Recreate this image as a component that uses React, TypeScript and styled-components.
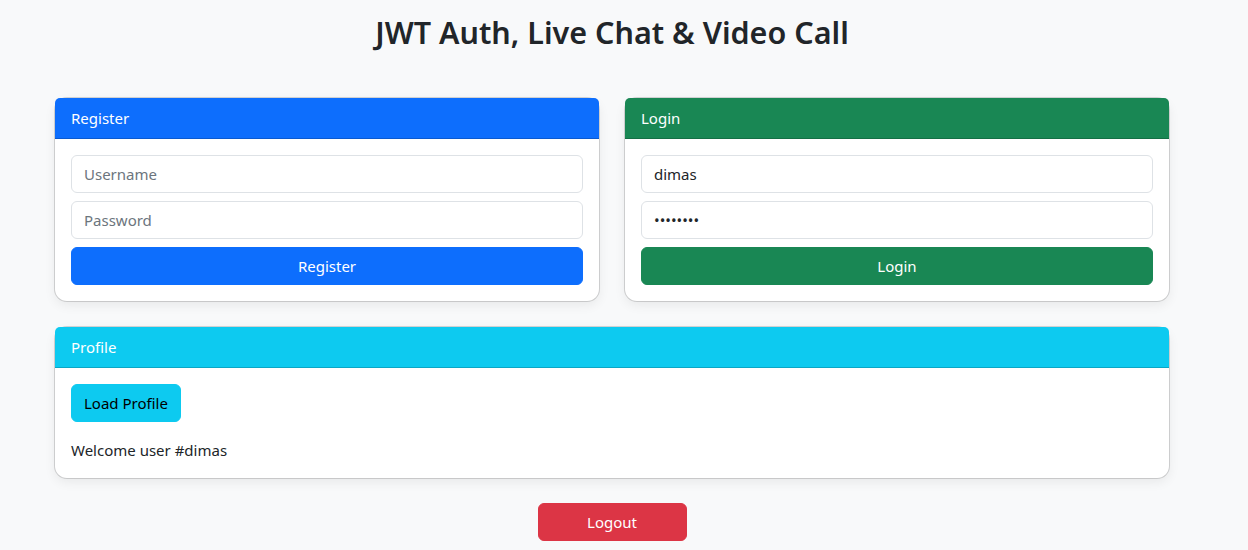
import styled, { createGlobalStyle } from 'styled-components';
import React from 'react';

const GlobalStyle = createGlobalStyle`
  * { box-sizing: border-box; }
  body {
    margin: 0;
    background: #f8f9fa;
    color: #212529;
    font-family: "Noto Sans", "Open Sans", "Liberation Sans", sans-serif;
    font-size: 15px;
    line-height: 24px;
  }
`;

const Page = styled.div`
  width: 1114px;
  margin-left: 55px;
  padding-top: 13px;
`;

const Title = styled.h1`
  margin: 0 0 47px;
  text-align: center;
  font-size: 30.5px;
  font-weight: 600;
  line-height: 38px;
  color: #212529;
`;

const Row = styled.div`
  display: grid;
  grid-template-columns: 1fr 1fr;
  gap: 26px;
  margin-bottom: 26px;
`;

const Card = styled.div<{ $mb?: number }>`
  display: flex;
  flex-direction: column;
  background: #fff;
  border-radius: 12px;
  box-shadow: 0 0 0 1px rgba(0, 0, 0, 0.15), 0 4px 12px rgba(0, 0, 0, 0.07);
  margin-bottom: ${({ $mb }) => $mb ?? 0}px;
`;

const CardHeader = styled.div<{ $bg: string }>`
  background: ${({ $bg }) => $bg};
  color: #fff;
  padding: 8px 16px;
  border-bottom: 1px solid rgba(0, 0, 0, 0.175);
  border-radius: 5px 5px 0 0;
  line-height: 24px;
`;

const CardBody = styled.div`
  padding: 16px;
  display: flex;
  flex-direction: column;
  gap: 8px;
`;

const Input = styled.input`
  display: block;
  width: 100%;
  height: 38px;
  padding: 6px 12px;
  font: inherit;
  color: #212529;
  background: #fff;
  border: 1px solid #dee2e6;
  border-radius: 6px;
  outline: none;

  &::placeholder {
    color: #6c757d;
  }
`;

const Button = styled.button<{ $bg: string; $fg?: string; $block?: boolean }>`
  display: inline-block;
  width: ${({ $block }) => ($block ? '100%' : 'auto')};
  height: 38px;
  padding: 6px 12px;
  font: inherit;
  line-height: 24px;
  color: ${({ $fg }) => $fg ?? '#fff'};
  background: ${({ $bg }) => $bg};
  border: 1px solid ${({ $bg }) => $bg};
  border-radius: 6px;
  cursor: pointer;
`;

const ProfileBody = styled.div`
  padding: 16px;
  display: flex;
  flex-direction: column;
  align-items: flex-start;
  gap: 16px;
`;

const Text = styled.p`
  margin: 0;
`;

const Footer = styled.div`
  display: flex;
  justify-content: center;
`;

const LogoutButton = styled(Button)`
  width: 149px;
`;

const App = () => {
  return (
    <>
      <GlobalStyle />
      <Page>
        <Title>JWT Auth, Live Chat &amp; Video Call</Title>
        <Row>
          <Card>
            <CardHeader $bg="#0d6efd">Register</CardHeader>
            <CardBody>
              <Input placeholder="Username" />
              <Input type="password" placeholder="Password" />
              <Button $bg="#0d6efd" $block>Register</Button>
            </CardBody>
          </Card>
          <Card>
            <CardHeader $bg="#198754">Login</CardHeader>
            <CardBody>
              <Input defaultValue="dimas" />
              <Input type="password" defaultValue="password" />
              <Button $bg="#198754" $block>Login</Button>
            </CardBody>
          </Card>
        </Row>
        <Card $mb={25}>
          <CardHeader $bg="#0dcaf0">Profile</CardHeader>
          <ProfileBody>
            <Button $bg="#0dcaf0" $fg="#000">Load Profile</Button>
            <Text>Welcome user #dimas</Text>
          </ProfileBody>
        </Card>
        <Footer>
          <LogoutButton $bg="#dc3545">Logout</LogoutButton>
        </Footer>
      </Page>
    </>
  );
};

export default App;
